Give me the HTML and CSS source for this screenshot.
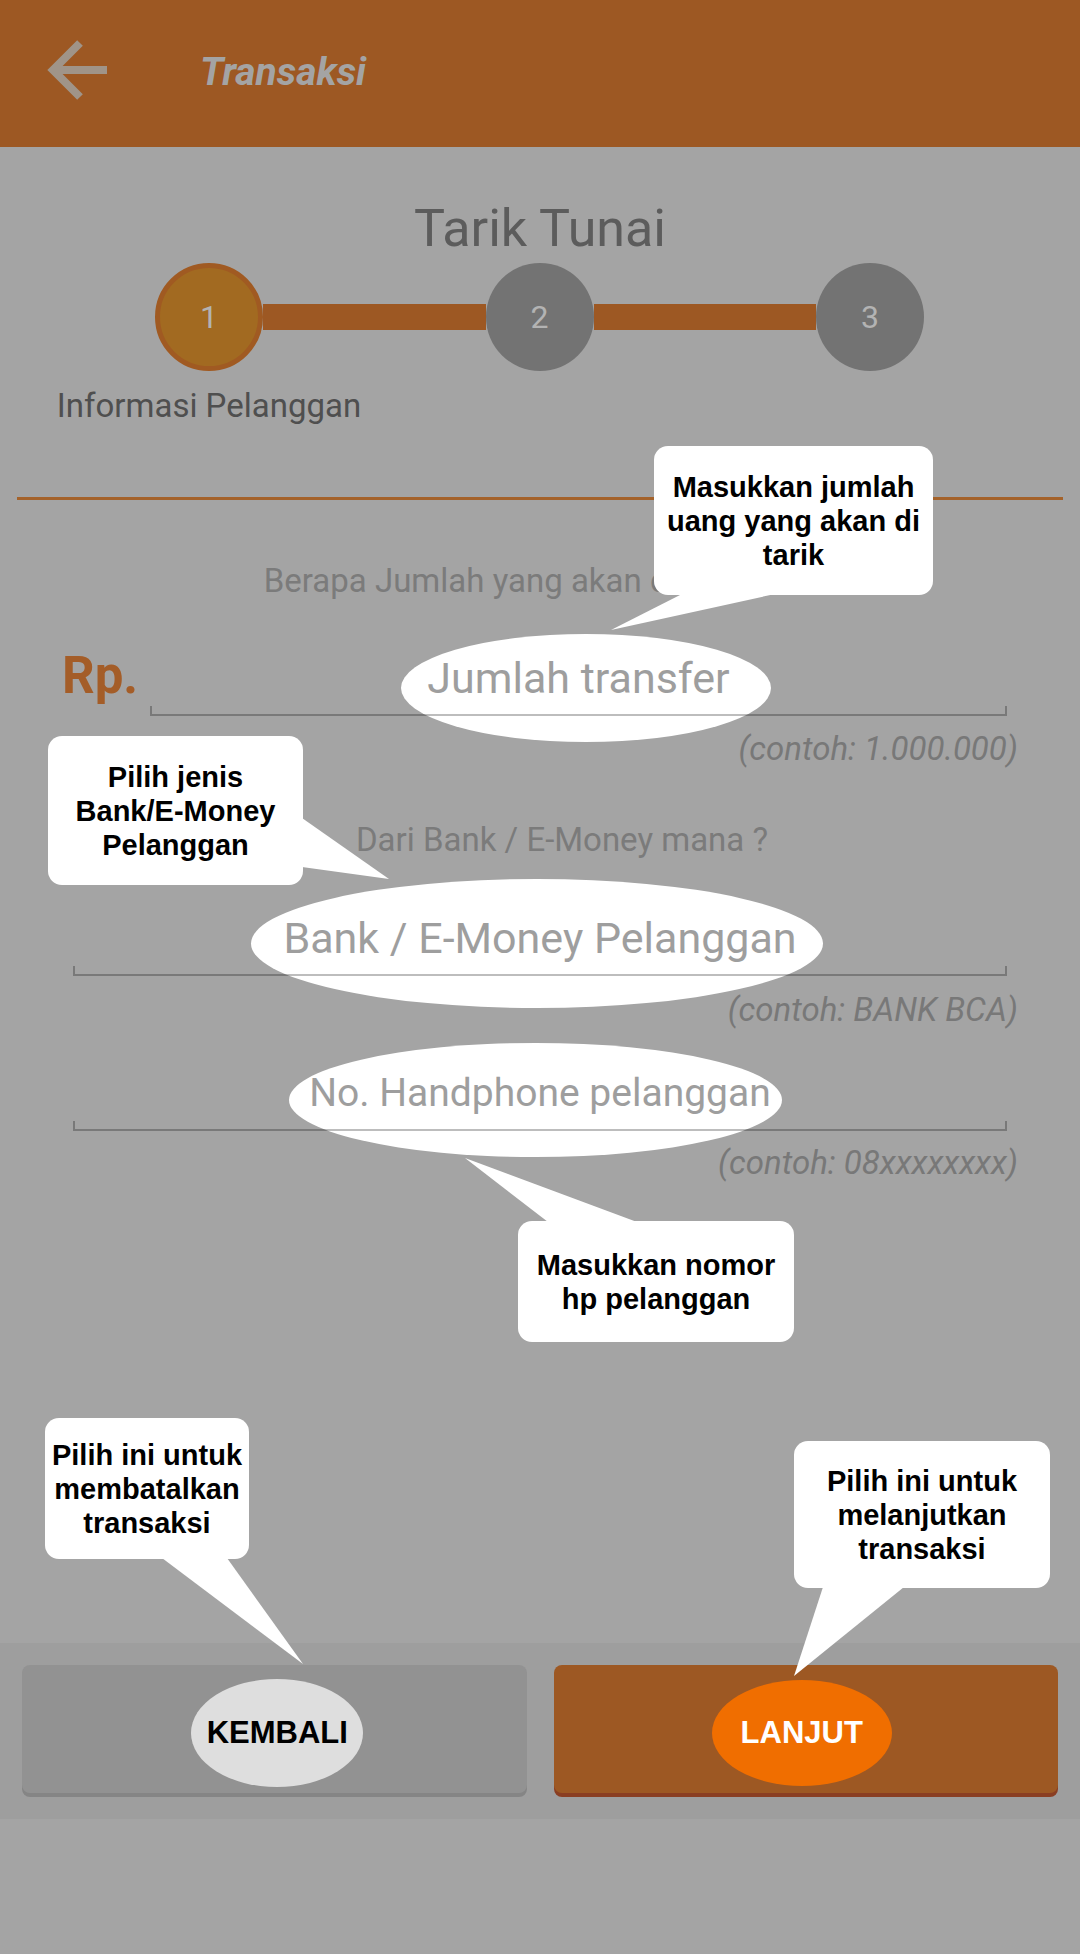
FILE: index.html
```html
<!DOCTYPE html>
<html lang="id">
<head>
    <meta charset="UTF-8">
    <meta name="viewport" content="width=device-width, initial-scale=1.0">
    <title>Transaksi - Tarik Tunai</title>
    <link rel="stylesheet" href="styles.css">
</head>
<body>
    <div class="screen">
        <header class="appbar">
            <svg class="back-icon" width="64" height="64" viewBox="0 0 64 64">
                <path d="M63 32H10 M36 5L9 32L36 59" fill="none" stroke="#a09488" stroke-width="8"/>
            </svg>
            <h1 class="appbar-title">Transaksi</h1>
        </header>

        <main class="content">
            <h2 class="page-title">Tarik Tunai</h2>
            <div class="stepper">
                <span class="step step-active">1</span>
                <span class="step-bar"></span>
                <span class="step">2</span>
                <span class="step-bar"></span>
                <span class="step">3</span>
            </div>
            <div class="step-labels">
                <span class="step-label">Informasi Pelanggan</span>
            </div>
            <hr class="divider">

            <p class="question question-amount">Berapa Jumlah yang akan di tarik ?</p>
            <div class="amount-row">
                <span class="currency">Rp.</span>
                <div class="field field-amount">
                    <span class="spot"></span>
                    <input type="text" class="field-input" placeholder="Jumlah transfer">
                    <div class="field-line"></div>
                </div>
            </div>
            <p class="hint hint-amount">(contoh: 1.000.000)</p>

            <p class="question question-bank">Dari Bank / E-Money mana ?</p>
            <div class="field field-bank">
                <span class="spot"></span>
                <input type="text" class="field-input" placeholder="Bank / E-Money Pelanggan">
                <div class="field-line"></div>
            </div>
            <p class="hint hint-bank">(contoh: BANK BCA)</p>

            <div class="field field-phone">
                <span class="spot"></span>
                <input type="text" class="field-input" placeholder="No. Handphone pelanggan">
                <div class="field-line"></div>
            </div>
            <p class="hint hint-phone">(contoh: 08xxxxxxxx)</p>
        </main>

        <footer class="actions">
            <button class="btn btn-back"><span class="btn-spot">KEMBALI</span></button>
            <button class="btn btn-next"><span class="btn-spot">LANJUT</span></button>
        </footer>

        <!-- petunjuk (callout) -->
        <svg class="tails" width="1080" height="1954" viewBox="0 0 1080 1954">
            <polygon points="682,594 775,594 611,630"/>
            <polygon points="302,818 302,867 389,879"/>
            <polygon points="548,1222 637,1222 465,1158"/>
            <polygon points="162,1558 227,1558 303,1664"/>
            <polygon points="823,1587 904,1587 794,1676"/>
        </svg>
        <div class="callout callout-amount">Masukkan jumlah<br>uang yang akan di<br>tarik</div>
        <div class="callout callout-bank">Pilih jenis<br>Bank/E-Money<br>Pelanggan</div>
        <div class="callout callout-phone">Masukkan nomor<br>hp pelanggan</div>
        <div class="callout callout-back">Pilih ini untuk<br>membatalkan<br>transaksi</div>
        <div class="callout callout-next">Pilih ini untuk<br>melanjutkan<br>transaksi</div>
    </div>
</body>
</html>
```

FILE: styles.css
```css
body {
    margin: 0;
    padding: 0;
    font-family: Roboto, "Noto Sans", Arial, sans-serif;
}
* {box-sizing: border-box;}
.screen {
    position: relative;
    width: 1080px;
    height: 1954px;
    overflow: hidden;
    background-color: #a4a4a4;
    display: flex;
    flex-direction: column;
}
.appbar {
    height: 147px;
    background-color: #9d5823;
    display: flex;
    align-items: center;
    flex-shrink: 0;
}
.back-icon {
    margin-left: 44px;
    margin-top: -7px;
}
.appbar-title {
    margin: -2px 0 0 92px;
    font-size: 39px;
    line-height: 1;
    font-weight: bold;
    font-style: italic;
    color: #a4a4a4;
}
.content {
    flex: 1;
}
.page-title {
    margin: 56px 0 0;
    font-size: 52px;
    line-height: 1;
    font-weight: normal;
    text-align: center;
    color: #5c5c5c;
}
.stepper {
    display: flex;
    align-items: center;
    width: 769px;
    margin: 8px 0 0 155px;
}
.step {
    width: 108px;
    height: 108px;
    border-radius: 50%;
    background-color: #737373;
    color: #b3b3b3;
    font-size: 32px;
    display: flex;
    align-items: center;
    justify-content: center;
    flex-shrink: 0;
}
.step-active {
    background-color: #a26a21;
    border: 5px solid #a05a22;
}
.step-bar {
    flex: 1;
    height: 26px;
    background-color: #9d5823;
}
.step-labels {
    margin-top: 18px;
}
.step-label {
    display: block;
    width: 330px;
    margin-left: 44px;
    text-align: center;
    font-size: 33px;
    line-height: 1;
    color: #4f4f4f;
}
.divider {
    margin: 75px 17px 0;
    border: 0;
    height: 3px;
    background-color: #a4622a;
}
.question {
    margin: 64px 0 0;
    font-size: 33px;
    line-height: 1;
    text-align: center;
    color: #7b7b7b;
}
.question-amount {
    padding-right: 43px;
}
.question-bank {
    margin-top: 58px;
    padding-left: 44px;
}
.amount-row {
    display: flex;
    align-items: flex-start;
    margin-top: 53px;
    padding-left: 62px;
}
.currency {
    width: 88px;
    font-size: 51px;
    line-height: 1;
    font-weight: bold;
    color: #a45d28;
}
.field {
    position: relative;
}
.field-amount {
    width: 857px;
}
.field-bank,
.field-phone {
    margin: 0 73px;
}
.field-bank {
    margin-top: 54px;
}
.field-phone {
    margin-top: 39px;
}
.spot {
    position: absolute;
    background-color: #fff;
    border-radius: 50%;
}
.field-amount .spot {
    left: 251px;
    top: -16px;
    width: 370px;
    height: 108px;
}
.field-bank .spot {
    left: 178px;
    top: -31px;
    width: 572px;
    height: 129px;
}
.field-phone .spot {
    left: 216px;
    top: -22px;
    width: 493px;
    height: 114px;
}
.field-input {
    position: relative;
    display: block;
    width: 100%;
    height: 56px;
    padding: 0;
    border: none;
    outline: none;
    background: transparent;
    font-family: Roboto, "Noto Sans", Arial, sans-serif;
    font-size: 43px;
    text-align: center;
    color: #9e9e9e;
}
.field-phone .field-input {
    font-size: 39px;
}
.field-input::placeholder {
    color: #9e9e9e;
    opacity: 1;
}
.field-line {
    position: relative;
    height: 10px;
    border: 2px solid rgba(0, 0, 0, 0.26);
    border-top: none;
}
.hint {
    margin: 16px 0 0;
    padding-right: 62px;
    font-size: 33px;
    line-height: 1;
    font-style: italic;
    text-align: right;
    color: #787878;
}
.hint-bank {
    margin-top: 17px;
}
.hint-phone {
    margin-top: 15px;
}
.actions {
    flex-shrink: 0;
    display: flex;
    align-items: flex-start;
    gap: 27px;
    height: 176px;
    padding: 22px 22px 0;
    margin-bottom: 135px;
    background-color: #9e9e9e;
}
.btn {
    flex: 1;
    height: 128px;
    border: none;
    border-radius: 8px;
    padding: 0;
    display: flex;
    align-items: center;
    justify-content: center;
    cursor: pointer;
}
.btn-back {
    background-color: #929292;
    box-shadow: 0 4px 0 #858585;
}
.btn-next {
    background-color: #9d5823;
    box-shadow: 0 4px 0 #8a3e22;
}
.btn-spot {
    display: flex;
    align-items: center;
    justify-content: center;
    margin-top: 7px;
    border-radius: 50%;
    font-family: "Liberation Sans", Arial, sans-serif;
    font-weight: bold;
    font-size: 31px;
}
.btn-back .btn-spot {
    width: 172px;
    height: 108px;
    margin-left: 6px;
    background-color: #dedede;
    color: #000;
}
.btn-next .btn-spot {
    width: 180px;
    height: 106px;
    margin-left: -8px;
    background-color: #f06e00;
    color: #fff;
}
.tails {
    position: absolute;
    top: 0;
    left: 0;
    fill: #fff;
    pointer-events: none;
}
.callout {
    position: absolute;
    display: flex;
    align-items: center;
    justify-content: center;
    background-color: #fff;
    border-radius: 14px;
    font-family: "Liberation Sans", Arial, sans-serif;
    font-weight: bold;
    font-size: 29px;
    line-height: 34px;
    text-align: center;
    color: #000;
}
.callout-amount {
    left: 654px;
    top: 446px;
    width: 279px;
    height: 149px;
}
.callout-bank {
    left: 48px;
    top: 736px;
    width: 255px;
    height: 149px;
}
.callout-phone {
    left: 518px;
    top: 1221px;
    width: 276px;
    height: 121px;
}
.callout-back {
    left: 45px;
    top: 1418px;
    width: 204px;
    height: 141px;
}
.callout-next {
    left: 794px;
    top: 1441px;
    width: 256px;
    height: 147px;
}
```
